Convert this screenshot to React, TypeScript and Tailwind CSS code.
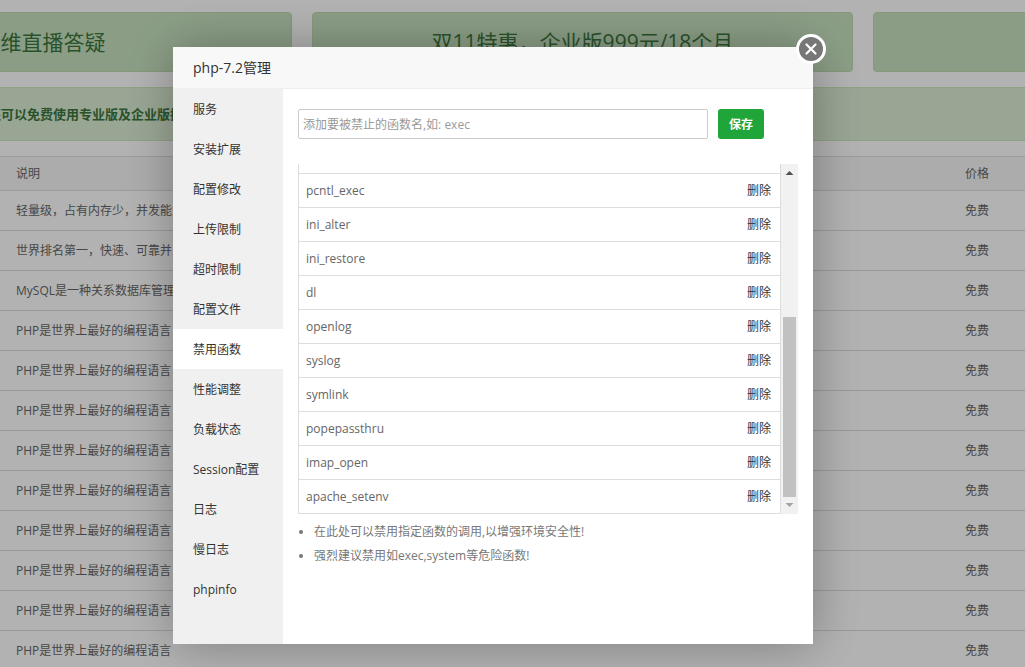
import clsx from 'clsx'

const software = [
  '轻量级，占有内存少，并发能力强',
  '世界排名第一，快速、可靠并且可扩展',
  'MySQL是一种关系数据库管理系统',
  ...Array.from({ length: 9 }, () => 'PHP是世界上最好的编程语言'),
]

const menu = [
  '服务',
  '安装扩展',
  '配置修改',
  '上传限制',
  '超时限制',
  '配置文件',
  '禁用函数',
  '性能调整',
  '负载状态',
  'Session配置',
  '日志',
  '慢日志',
  'phpinfo',
]

const disabledFunctions = [
  'pcntl_exec',
  'ini_alter',
  'ini_restore',
  'dl',
  'openlog',
  'syslog',
  'symlink',
  'popepassthru',
  'imap_open',
  'apache_setenv',
]

const promos = ['堡塔运维直播答疑', '双11特惠，企业版999元/18个月', '']

const SoftwarePage = () => (
  <main className="h-screen overflow-hidden bg-white pt-3 text-[#666]">
    <div className="-ml-[249px] flex gap-5">
      {promos.map((promo, index) => (
        <div
          key={index}
          className="flex h-[60px] w-[541px] shrink-0 items-center justify-center rounded border border-[#bfdbae] bg-[#c7e2bf] text-[21px] text-[#3c763d]"
        >
          {promo}
        </div>
      ))}
    </div>

    <div className="mt-[15px] -ml-3 flex h-[54px] items-center border-y border-[#d0e6be] bg-[#dceed5] text-[13px] font-bold whitespace-nowrap text-[#3c763d]">
      还可以免费使用专业版及企业版插件
    </div>

    <table className="mt-[15px] w-full border-collapse text-left">
      <thead>
        <tr className="h-[34px] border-y border-[#ddd] bg-[#f6f6f6]">
          <th className="pl-4 font-normal">说明</th>
          <th className="w-[60px] font-normal">价格</th>
        </tr>
      </thead>
      <tbody>
        {software.map((description, index) => (
          <tr key={index} className="h-10 border-b border-[#ddd]">
            <td className="pt-px pl-4">{description}</td>
            <td className="pt-px">免费</td>
          </tr>
        ))}
      </tbody>
    </table>
  </main>
)

const Scrollbar = () => (
  <div className="flex w-[17px] flex-col items-center bg-[#f1f1f1]">
    <svg className="h-[17px] w-[17px] shrink-0" viewBox="0 0 17 17">
      <path d="M4.5 11L8.5 7L12.5 11Z" fill="#505050" />
    </svg>
    <div className="flex w-[13px] grow flex-col justify-end">
      <div className="h-[180px] bg-[#c1c1c1]" />
    </div>
    <svg className="h-[17px] w-[17px] shrink-0" viewBox="0 0 17 17">
      <path d="M4.5 6L8.5 10L12.5 6Z" fill="#a3a3a3" />
    </svg>
  </div>
)

const FunctionList = () => (
  <div className="mt-[25px] flex h-[350px]">
    <div className="flex grow flex-col justify-end overflow-hidden">
      <table className="w-full border-collapse border-x border-[#ddd]">
        <tbody>
          <tr className="h-[10px] border-b border-[#ddd]">
            <td colSpan={2} />
          </tr>
          {disabledFunctions.map((name) => (
            <tr key={name} className="h-[34px] border-b border-[#ddd]">
              <td className="pl-[7px] text-[#666]">{name}</td>
              <td className="pr-[9px] text-right">
                <button className="text-[#333]">删除</button>
              </td>
            </tr>
          ))}
        </tbody>
      </table>
    </div>
    <Scrollbar />
  </div>
)

const DisabledFunctions = () => (
  <section className="grow bg-white px-[15px] pt-5">
    <form className="flex gap-[10px]" onSubmit={(e) => e.preventDefault()}>
      <input
        type="text"
        aria-label="函数名"
        placeholder="添加要被禁止的函数名,如: exec"
        className="h-[30px] w-[410px] rounded-xs border border-[#ccc] px-1 placeholder:text-[#999]"
      />
      <button className="h-[30px] w-[46px] rounded-[3px] bg-[#20a53a] pt-0.5 font-bold text-white">
        保存
      </button>
    </form>

    <FunctionList />

    <ul className="mt-[6px] list-disc pl-4 leading-6 text-[#777]">
      <li>在此处可以禁用指定函数的调用,以增强环境安全性!</li>
      <li>强烈建议禁用如exec,system等危险函数!</li>
    </ul>
  </section>
)

const ManageDialog = () => (
  <div className="fixed inset-0 flex items-center justify-center bg-black/30 pt-6 pr-[39px]">
    <div
      role="dialog"
      aria-labelledby="dialog-title"
      className="relative w-[640px] rounded-xs bg-white text-[#333] shadow-[1px_1px_50px_rgba(0,0,0,0.3)]"
    >
      <h2
        id="dialog-title"
        className="flex h-[42px] items-center border-b border-[#eee] bg-[#f8f8f8] px-5 text-sm"
      >
        php-7.2管理
      </h2>

      <button
        aria-label="关闭"
        className="absolute -top-[13px] -right-[13px] h-[30px] w-[30px] rounded-full border-3 border-white bg-[#777]"
      >
        <svg viewBox="0 0 24 24" className="h-6 w-6">
          <path
            d="M7.5 7.5L16.5 16.5M16.5 7.5L7.5 16.5"
            stroke="#fff"
            strokeWidth="2.2"
            strokeLinecap="round"
          />
        </svg>
      </button>

      <div className="flex">
        <nav className="w-[110px] shrink-0 bg-[#f0f0f0] pb-[35px]">
          {menu.map((item) => (
            <button
              key={item}
              className={clsx(
                'block h-10 w-full pt-0.5 pl-5 text-left',
                item === '禁用函数' && 'bg-white',
              )}
            >
              {item}
            </button>
          ))}
        </nav>

        <DisabledFunctions />
      </div>
    </div>
  </div>
)

export default function App() {
  return (
    <div className="font-['Open_Sans','Noto_Sans_CJK_SC',sans-serif] text-[12px] leading-5">
      <SoftwarePage />
      <ManageDialog />
    </div>
  )
}
